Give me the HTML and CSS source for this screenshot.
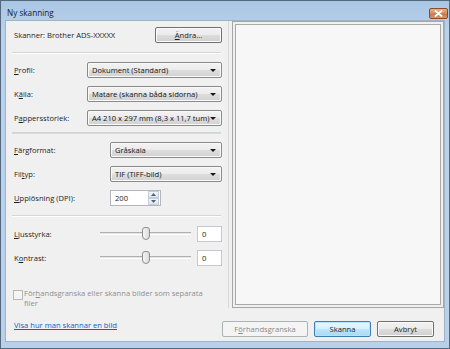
FILE: index.html
```html
<!DOCTYPE html>
<html lang="sv">
<head>
<meta charset="utf-8">
<title>Ny skanning</title>
<link rel="stylesheet" href="styles.css">
</head>
<body>
<div class="window">
  <div class="titlebar">
    <span class="title">Ny skanning</span>
    <div class="close">
      <svg width="9" height="7" viewBox="0 0 9 7"><path d="M1.5 1 L7.5 6 M7.5 1 L1.5 6" stroke="#fff" stroke-width="1.8" stroke-linecap="round"/></svg>
    </div>
  </div>
  <div class="client">
    <div class="main">
      <div class="left">
        <div class="scanner-row">
          <span class="scanner">Skanner: Brother ADS-XXXXX</span>
          <button class="btn change"><u>Ä</u>ndra...</button>
        </div>
        <div class="sep sep-top"></div>

        <div class="field f-profil">
          <span class="lbl"><u>P</u>rofil:</span>
          <div class="select wide"><span>Dokument (Standard)</span><i class="arrow"></i></div>
        </div>
        <div class="field">
          <span class="lbl">K<u>ä</u>lla:</span>
          <div class="select wide"><span>Matare (skanna båda sidorna)</span><i class="arrow"></i></div>
        </div>
        <div class="field">
          <span class="lbl">P<u>a</u>ppersstorlek:</span>
          <div class="select wide"><span>A4 210 x 297 mm (8,3 x 11,7 tum)</span><i class="arrow"></i></div>
        </div>

        <div class="groove"></div>

        <div class="field f-color">
          <span class="lbl"><u>F</u>ärgformat:</span>
          <div class="select narrow"><span>Gråskala</span><i class="arrow"></i></div>
        </div>
        <div class="field f-type">
          <span class="lbl">Fil<u>t</u>yp:</span>
          <div class="select narrow"><span>TIF (TIFF-bild)</span><i class="arrow"></i></div>
        </div>
        <div class="field f-res">
          <span class="lbl"><u>U</u>pplösning (DPI):</span>
          <div class="spin">
            <span class="spin-val">200</span>
            <div class="spin-btns">
              <div class="spin-btn"><svg width="5" height="3" viewBox="0 0 5 3"><path d="M0 3 L2.5 0 L5 3Z" fill="#4d6185"/></svg></div>
              <div class="spin-btn"><svg width="5" height="3" viewBox="0 0 5 3"><path d="M0 0 L2.5 3 L5 0Z" fill="#4d6185"/></svg></div>
            </div>
          </div>
        </div>

        <div class="sep sep-mid"></div>

        <div class="field f-slider f-bright">
          <span class="lbl"><u>L</u>jusstyrka:</span>
          <div class="slider"><div class="track"></div><div class="thumb"></div></div>
          <div class="valbox">0</div>
        </div>
        <div class="field f-slider f-contrast">
          <span class="lbl">K<u>o</u>ntrast:</span>
          <div class="slider"><div class="track"></div><div class="thumb"></div></div>
          <div class="valbox">0</div>
        </div>

        <div class="check-row">
          <div class="checkbox"></div>
          <div class="check-text">
            <span class="check-line">För<u>h</u>andsgranska eller skanna bilder som separata</span>
            <span class="check-line">filer</span>
          </div>
        </div>
      </div>
      <div class="preview"><div class="preview-inner"></div></div>
    </div>
    <div class="footer">
      <a class="link" href="#">Visa hur man skannar en bild</a>
      <div class="buttons">
        <button class="btn disabled">F<u>ö</u>rhandsgranska</button>
        <button class="btn default">Skanna</button>
        <button class="btn">Avbryt</button>
      </div>
    </div>
  </div>
</div>
</body>
</html>
```

FILE: styles.css
```css
* { box-sizing: border-box; }
html, body { margin: 0; padding: 0; }
body {
  width: 450px;
  height: 349px;
  font-family: "Open Sans", "Noto Sans", sans-serif;
  font-size: 7.6px;
  color: #1e1e1e;
  background: #ffffff;
  overflow: hidden;
}
u { text-decoration: underline; text-underline-offset: 1px; }

.window {
  width: 450px;
  height: 349px;
  border: 1px solid #55697e;
  background: linear-gradient(#a9c6e4, #b9d1ea 30px, #b8d0ea);
  padding: 0 4px 6px 4px;
  display: flex;
  flex-direction: column;
}

.titlebar {
  height: 19px;
  display: flex;
  align-items: center;
  justify-content: space-between;
  padding-left: 2px;
}
.title { font-size: 8.2px; color: #1a1a1a; margin-top: 3px; }
.close {
  width: 19px;
  height: 11px;
  margin-top: 5px;
  margin-right: -3px;
  border: 1px solid #8a4a2c;
  border-radius: 2px;
  background: linear-gradient(#e6b08a, #d6915f 45%, #c7774a 55%, #d9976a);
  display: flex;
  align-items: center;
  justify-content: center;
}

.client {
  flex: 1;
  background: #f0f0f0;
  border: 1px solid #9db3ca;
  display: flex;
  flex-direction: column;
}

.main {
  display: flex;
  height: 287px;
}

.left {
  width: 224px;
  padding-left: 7px;
  padding-right: 9px;
  display: flex;
  flex-direction: column;
  border-right: 1px solid #d8d8d8;
}

.scanner-row {
  display: flex;
  align-items: center;
  justify-content: space-between;
  height: 16px;
  margin-top: 6px;
}
.scanner { margin-left: 1px; }

.btn {
  font-family: inherit;
  font-size: 7.6px;
  color: #1e1e1e;
  height: 16px;
  padding: 0;
  border: 1px solid #707070;
  border-radius: 2px;
  background: linear-gradient(#f2f2f2, #ebebeb 49%, #dddddd 50%, #cfcfcf);
  box-shadow: inset 0 0 0 1px #fbfbfb;
}
.change { width: 67px; margin-right: -3px; }

.sep {
  height: 2px;
  border-top: 1px solid #d5d5d5;
  border-bottom: 1px solid #ffffff;
  margin-right: -2px;
}
.sep-top { margin-top: 9px; margin-left: -1px; }

.field {
  display: flex;
  align-items: center;
  justify-content: space-between;
  height: 16px;
}
.f-profil { margin-top: 8px; }
.field + .field { margin-top: 8px; }
.lbl { margin-left: 1px; }

.select {
  height: 16px;
  border: 1px solid #8a8a8a;
  border-radius: 2px;
  background: linear-gradient(#f3f3f3, #ebebeb 49%, #dddddd 50%, #d2d2d2);
  box-shadow: inset 0 0 0 1px #fafafa;
  display: flex;
  align-items: center;
  justify-content: space-between;
  padding: 0 5px 0 4px;
  margin-right: -3px;
  color: #111;
}
.select span { white-space: nowrap; }
.wide { width: 135px; }
.narrow { width: 112px; }
.arrow {
  width: 0;
  height: 0;
  border-left: 3px solid transparent;
  border-right: 3px solid transparent;
  border-top: 3px solid #1a1a1a;
}

.groove {
  height: 5px;
  margin-top: 6px;
  margin-left: -1px;
  margin-right: -2px;
  border-top: 1px solid #d0d4d8;
  border-bottom: 1px solid #d6d9dc;
  background: #eceeef;
}

.f-color { margin-top: 8px; }

.spin {
  width: 51px;
  height: 16px;
  border: 1px solid #b4b7bc;
  background: #ffffff;
  display: flex;
  align-items: center;
  justify-content: space-between;
  margin-right: 58px;
  padding-left: 4px;
}
.spin-btns {
  display: flex;
  flex-direction: column;
  width: 11px;
  height: 14px;
  margin-right: 1px;
}
.spin-btn {
  flex: 1;
  border: 1px solid #c5cdd6;
  background: linear-gradient(#f4f6f9, #dfe6ef);
  display: flex;
  align-items: center;
  justify-content: center;
}

.sep-mid { margin-top: 9px; margin-left: -1px; }

.f-slider { height: 16px; }
.f-bright { margin-top: 9px; }
.f-contrast { margin-top: 9px; }
.slider {
  position: relative;
  width: 91px;
  height: 16px;
  margin-left: auto;
  margin-right: 6px;
}
.track {
  position: absolute;
  left: 0;
  right: 0;
  top: 6px;
  height: 3px;
  border-top: 1px solid #b0b0b0;
  border-bottom: 1px solid #ffffff;
  background: #e5e5e5;
}
.thumb {
  position: absolute;
  left: 42px;
  top: 1px;
  width: 8px;
  height: 13px;
  border: 1px solid #8d8d8d;
  border-radius: 3px 3px 4px 4px;
  background: linear-gradient(90deg, #f4f4f4, #dcdcdc);
}
.valbox {
  width: 25px;
  height: 16px;
  border: 1px solid #c6c9cd;
  background: #ffffff;
  padding-left: 4px;
  line-height: 14px;
  margin-right: -3px;
}

.check-row {
  display: flex;
  align-items: flex-start;
  margin-top: 22px;
  color: #8f8f8f;
}
.checkbox {
  width: 10px;
  height: 10px;
  border: 1px solid #b7b7b7;
  background: #f4f4f4;
  margin-top: 2px;
  flex: none;
}
.check-text {
  margin-left: 1px;
  display: flex;
  flex-direction: column;
  line-height: 10px;
}
.check-line { white-space: nowrap; }

.preview {
  width: 213px;
  margin-left: 3px;
  border: 1px solid #a7a7a7;
  padding: 2px;
  background: #f0f0f0;
}
.preview-inner {
  height: 100%;
  border: 1px solid #a9a9a9;
  background: #f7f7f7;
}

.footer {
  flex: 1;
  display: flex;
  align-items: flex-start;
  justify-content: space-between;
  padding: 13px 10px 0 8px;
}
.link {
  color: #0066cc;
  text-decoration: underline;
  margin-top: -1px;
}
.buttons { display: flex; gap: 6px; }
.buttons .btn { width: 57px; }
.buttons .disabled {
  width: 86px;
  color: #8a8a8a;
  border-color: #adb2b5;
  background: #f4f4f4;
  box-shadow: none;
}
.buttons .default {
  border-color: #3c7fb1;
  background: linear-gradient(#eaf6fd, #d9f0fc 49%, #bee6fd 50%, #a7d9f5);
  box-shadow: inset 0 0 0 1px #b8e4fb;
}
```
